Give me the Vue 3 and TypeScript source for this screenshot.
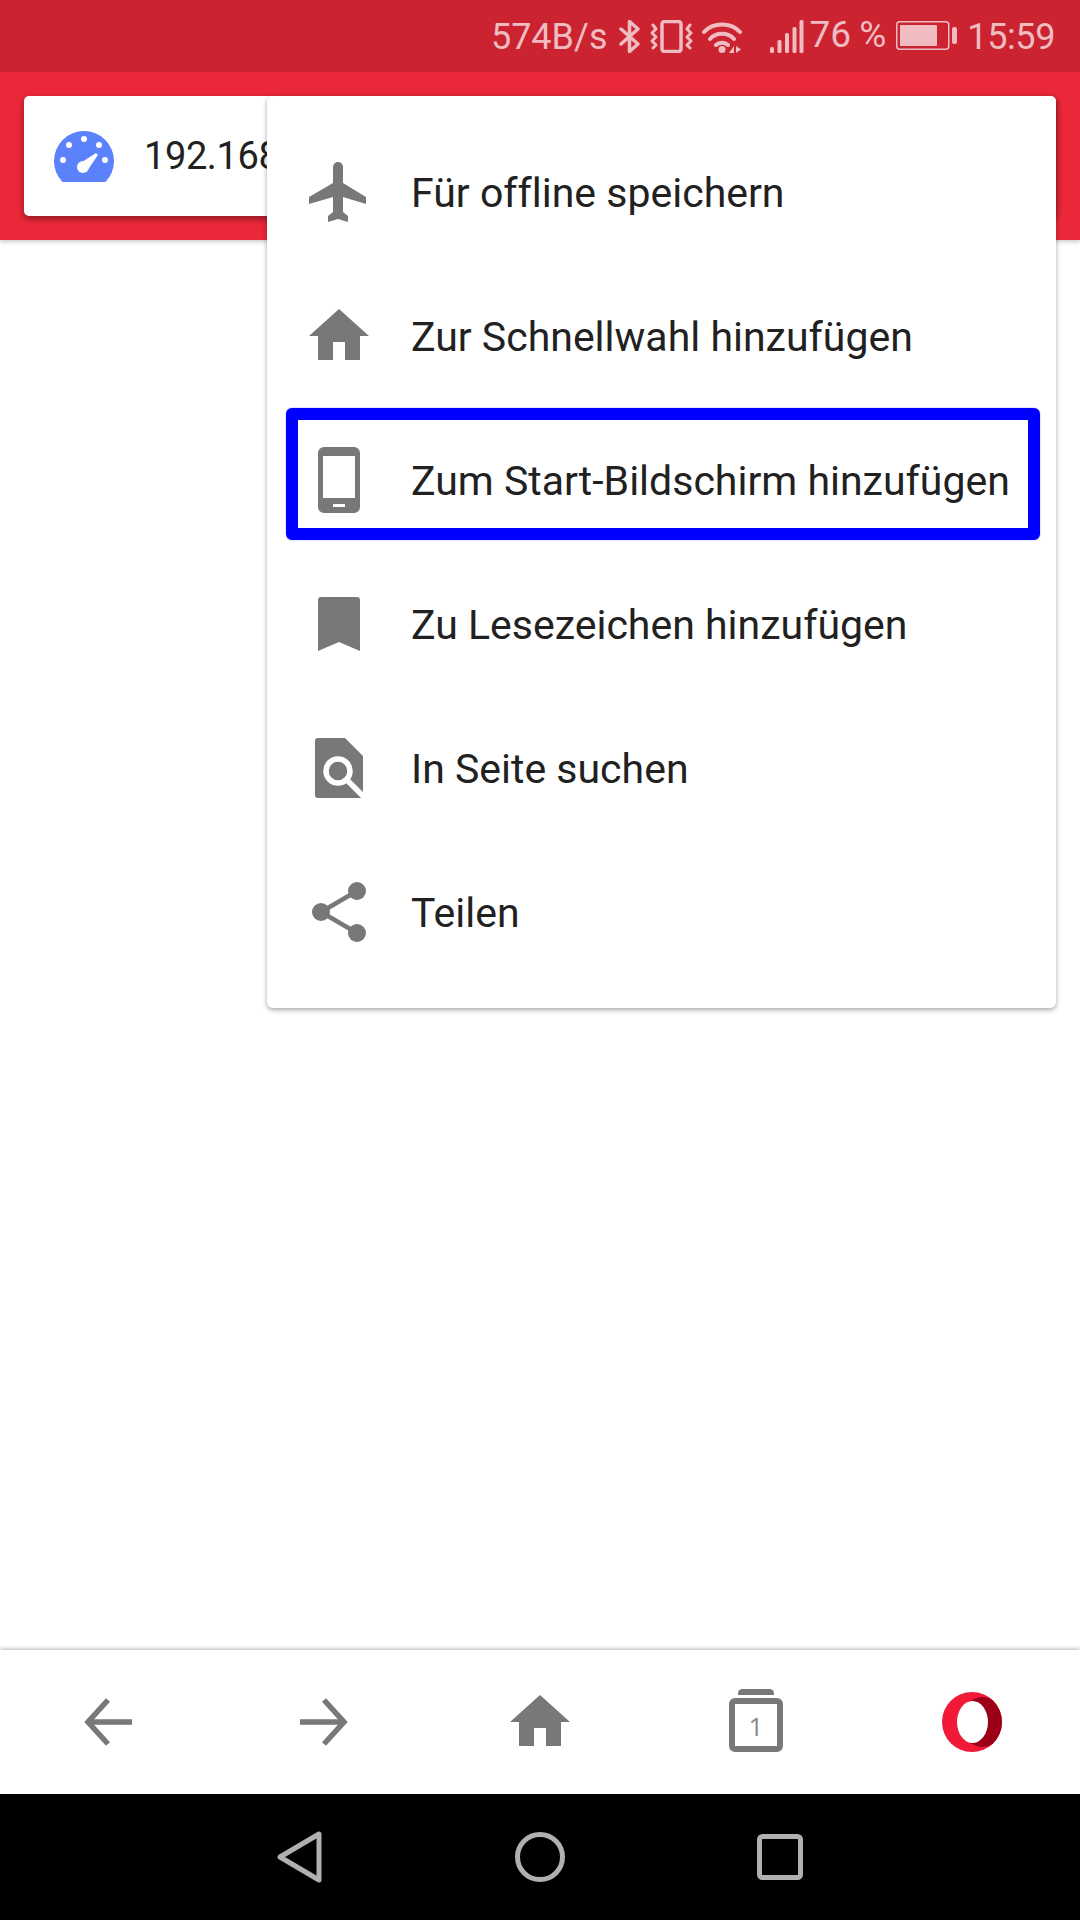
<script setup lang="ts">
const homePath = 'M36 9 66 36H57V60H42V42H30V60H15V36H6Z'
</script>

<template>
  <div class="screen">
    <div class="status-bar">
      <span class="speed">574B/s</span>
      <svg class="st-bt" width="21" height="33" viewBox="0 0 21 33">
        <path d="M2 9 19 24 10.5 31.500V1.500L19 9 2 24" fill="none" stroke="currentColor" stroke-width="3.500" stroke-linejoin="round" stroke-linecap="round" />
      </svg>
      <svg class="st-vib" width="43" height="33" viewBox="0 0 43 33">
        <rect x="12" y="1.500" width="19" height="30" rx="2.500" fill="none" stroke="currentColor" stroke-width="3.500" />
        <path d="M3 5 6 9 2 13 6 17 2 21 6 25 3 28M40 5 37 9 41 13 37 17 41 21 37 25 40 28" fill="none" stroke="currentColor" stroke-width="3" stroke-linecap="round" stroke-linejoin="round" />
      </svg>
      <svg class="st-wifi" width="40" height="33" viewBox="0 0 40 33">
        <path d="M2 12C11 2 29 2 38 12M8 19C14 12 26 12 32 19M14 25C17 22 23 22 26 25" fill="none" stroke="currentColor" stroke-width="4" stroke-linecap="round" />
        <circle cx="20" cy="29.500" r="3.500" fill="currentColor" />
        <path d="M27 33 32 26V33ZM34 26V33L39 29.500Z" fill="currentColor" />
      </svg>
      <svg class="st-signal" width="35" height="33" viewBox="0 0 35 33">
        <rect x="1" y="27" width="4" height="6" rx="1.500" fill="currentColor" />
        <rect x="8.500" y="20" width="4" height="13" rx="1.500" fill="currentColor" />
        <rect x="16" y="13" width="4" height="20" rx="1.500" fill="currentColor" />
        <rect x="23.500" y="7" width="4" height="26" rx="1.500" fill="currentColor" />
        <rect x="30.500" y="0" width="4" height="33" rx="1.500" fill="currentColor" />
      </svg>
      <span class="percent">76 %</span>
      <svg class="st-bat" width="61" height="29" viewBox="0 0 61 29">
        <rect x="0.750" y="0.750" width="52" height="27.500" rx="3" fill="none" stroke="currentColor" stroke-width="1.500" />
        <rect x="4" y="4" width="37" height="21" rx="1" fill="currentColor" />
        <rect x="56" y="6" width="5" height="17" rx="2" fill="currentColor" />
      </svg>
      <span class="clock">15:59</span>
    </div>

    <div class="toolbar">
      <div class="address">
        <svg class="icon" width="72" height="72" viewBox="0 0 72 72">
          <path d="M14.500 62A30 30 0 1 1 57.500 62Z" fill="#5b82fb" />
          <g fill="#fff">
            <circle cx="36" cy="19" r="3" />
            <circle cx="21" cy="25" r="3" />
            <circle cx="51" cy="25" r="3" />
            <circle cx="15" cy="40" r="3" />
            <circle cx="57" cy="40" r="3" />
            <circle cx="35" cy="47" r="6" />
            <path d="M31 44 48 33 50 35 39 51Z" />
          </g>
        </svg>
        <span class="url">192.168</span>
      </div>
    </div>

    <div class="content"></div>

    <div class="bottom-bar">
      <div class="bar-cell">
        <svg class="icon" width="72" height="72" viewBox="0 0 72 72">
          <path d="M36 14 16 36 36 58M16 36H60" fill="none" stroke="#787878" stroke-width="5.500" />
        </svg>
      </div>
      <div class="bar-cell">
        <svg class="icon" width="72" height="72" viewBox="0 0 72 72">
          <path d="M36 14 56 36 36 58M56 36H12" fill="none" stroke="#787878" stroke-width="5.500" />
        </svg>
      </div>
      <div class="bar-cell">
        <svg class="icon" width="72" height="72" viewBox="0 0 72 72">
          <path :d="homePath" fill="#787878" />
        </svg>
      </div>
      <div class="bar-cell">
        <svg class="icon" width="72" height="72" viewBox="0 0 72 72">
          <path d="M18 9V7.500A4.500 4.500 0 0 1 22.500 3H49.500A4.500 4.500 0 0 1 54 7.500V9Z" fill="#787878" />
          <rect x="12" y="15" width="48" height="48" rx="3" fill="none" stroke="#787878" stroke-width="6" />
          <text class="tab-count" x="36" y="50" text-anchor="middle">1</text>
        </svg>
      </div>
      <div class="bar-cell">
        <svg class="icon" width="72" height="72" viewBox="0 0 72 72">
          <defs>
            <clipPath id="opera-clip"><circle cx="36" cy="36" r="30" /></clipPath>
          </defs>
          <circle cx="36" cy="36" r="30" fill="#f01a38" />
          <ellipse cx="47" cy="36" rx="23" ry="25" fill="#9b0018" clip-path="url(#opera-clip)" />
          <ellipse cx="36.500" cy="36" rx="15.500" ry="21" fill="#fff" />
        </svg>
      </div>
    </div>

    <div class="nav-bar">
      <svg width="72" height="72" viewBox="0 0 72 72">
        <path d="M16 36 55 13V59Z" fill="none" stroke="#b0b0b0" stroke-width="5" stroke-linejoin="round" />
      </svg>
      <svg width="72" height="72" viewBox="0 0 72 72">
        <circle cx="36" cy="36" r="22.500" fill="none" stroke="#b0b0b0" stroke-width="5" />
      </svg>
      <svg width="72" height="72" viewBox="0 0 72 72">
        <rect x="15.500" y="15.500" width="41" height="41" rx="3" fill="none" stroke="#b0b0b0" stroke-width="5" />
      </svg>
    </div>

    <div class="menu">
      <div class="menu-row">
        <svg class="icon" width="72" height="72" viewBox="0 0 72 72">
          <path d="M35 6A5 5 0 0 1 40 11V27L63 41V48L40 41V56L45 60V66L35 63 25 66V60L30 56V41L6 48V41L30 27V11A5 5 0 0 1 35 6Z" fill="#787878" />
        </svg>
        <span>Für offline speichern</span>
      </div>
      <div class="menu-row">
        <svg class="icon" width="72" height="72" viewBox="0 0 72 72">
          <path :d="homePath" fill="#787878" />
        </svg>
        <span>Zur Schnellwahl hinzufügen</span>
      </div>
      <div class="menu-row">
        <svg class="icon" width="72" height="72" viewBox="0 0 72 72">
          <path d="M21 3H51A6 6 0 0 1 57 9V63A6 6 0 0 1 51 69H21A6 6 0 0 1 15 63V9A6 6 0 0 1 21 3ZM20 12V54H52V12ZM30 60V63H42V60Z" fill="#787878" fill-rule="evenodd" />
        </svg>
        <span>Zum Start-Bildschirm hinzufügen</span>
      </div>
      <div class="menu-row">
        <svg class="icon" width="72" height="72" viewBox="0 0 72 72">
          <path d="M18 9H54A3 3 0 0 1 57 12V63L36 54 15 63V12A3 3 0 0 1 18 9Z" fill="#787878" />
        </svg>
        <span>Zu Lesezeichen hinzufügen</span>
      </div>
      <div class="menu-row">
        <svg class="icon" width="72" height="72" viewBox="0 0 72 72">
          <path d="M15 6H42L60 24V66H15A3 3 0 0 1 12 63V9A3 3 0 0 1 15 6Z" fill="#787878" />
          <circle cx="35" cy="39" r="12" fill="none" stroke="#fff" stroke-width="5.500" />
          <path d="M44 48 62 66" stroke="#fff" stroke-width="5.500" />
        </svg>
        <span>In Seite suchen</span>
      </div>
      <div class="menu-row">
        <svg class="icon" width="72" height="72" viewBox="0 0 72 72">
          <path d="M54 15 18 36 54 57" fill="none" stroke="#787878" stroke-width="4.500" />
          <circle cx="54" cy="15" r="9" fill="#787878" />
          <circle cx="18" cy="36" r="9" fill="#787878" />
          <circle cx="54" cy="57" r="9" fill="#787878" />
        </svg>
        <span>Teilen</span>
      </div>
      <div class="highlight"></div>
    </div>
  </div>
</template>

<style scoped>
.screen {
  position: relative;
  width: 1080px;
  height: 1920px;
  display: flex;
  flex-direction: column;
  overflow: hidden;
  background: #fff;
  font-family: Roboto, "Liberation Sans", sans-serif;
  color: #212121;
}
.status-bar {
  height: 72px;
  flex-shrink: 0;
  display: flex;
  justify-content: flex-end;
  align-items: center;
  padding-right: 25px;
  box-sizing: border-box;
  background: #cb2330;
  color: #f0bcc2;
  font-size: 36px;
}
.status-bar svg,
.status-bar span {
  display: block;
  flex-shrink: 0;
}
.speed { margin-right: 12px; margin-top: 2px; }
.st-vib { margin-left: 10px; }
.st-wifi { margin-left: 9px; }
.st-signal { margin-left: 27px; }
.percent {
  margin-left: 5px;
  margin-top: -4px;
  font-size: 37px;
  word-spacing: -1px;
}
.st-bat { margin-left: 10px; margin-top: -1px; }
.clock { margin-left: 10px; margin-top: 2px; letter-spacing: -0.400px; }

.toolbar {
  height: 168px;
  flex-shrink: 0;
  padding: 24px;
  box-sizing: border-box;
  background: #ea2839;
  box-shadow: 0 2px 4px rgba(0, 0, 0, 0.2);
  position: relative;
  z-index: 1;
}
.address {
  height: 120px;
  display: flex;
  align-items: center;
  gap: 24px;
  padding-left: 24px;
  background: #fff;
  border-radius: 5px;
  box-shadow: 0 3px 6px rgba(0, 0, 0, 0.4);
}
.url {
  font-size: 38px;
  letter-spacing: -0.400px;
}
.icon {
  display: block;
  flex-shrink: 0;
}
.content {
  flex: 1;
  background: #fff;
}
.bottom-bar {
  height: 144px;
  flex-shrink: 0;
  display: grid;
  grid-template-columns: repeat(5, 216px);
  align-items: center;
  justify-items: center;
  background: #fff;
  box-shadow: 0 -1px 4px rgba(0, 0, 0, 0.3);
  position: relative;
}
.tab-count {
  font-family: "Open Sans", sans-serif;
  font-size: 26px;
  fill: #888;
}
.nav-bar {
  height: 126px;
  flex-shrink: 0;
  display: grid;
  grid-template-columns: repeat(3, 240px);
  justify-content: center;
  justify-items: center;
  align-items: center;
  background: #000;
}
.nav-bar svg {
  display: block;
}

.menu {
  position: absolute;
  left: 267px;
  top: 96px;
  width: 789px;
  padding: 24px 0;
  box-sizing: border-box;
  background: #fff;
  border-radius: 6px;
  box-shadow: 0 2px 5px rgba(0, 0, 0, 0.35);
  z-index: 2;
}
.menu-row {
  height: 144px;
  display: flex;
  align-items: center;
  gap: 36px;
  padding-left: 36px;
  font-size: 41px;
  font-variant-ligatures: none;
  white-space: nowrap;
}
.menu-row span {
  margin-top: 1px;
}
.highlight {
  position: absolute;
  left: 19px;
  top: 312px;
  width: 754px;
  height: 132px;
  box-sizing: border-box;
  border: 12px solid #0000ff;
  border-radius: 6px;
  box-shadow: 0 0 1px #0000ff;
}
</style>
